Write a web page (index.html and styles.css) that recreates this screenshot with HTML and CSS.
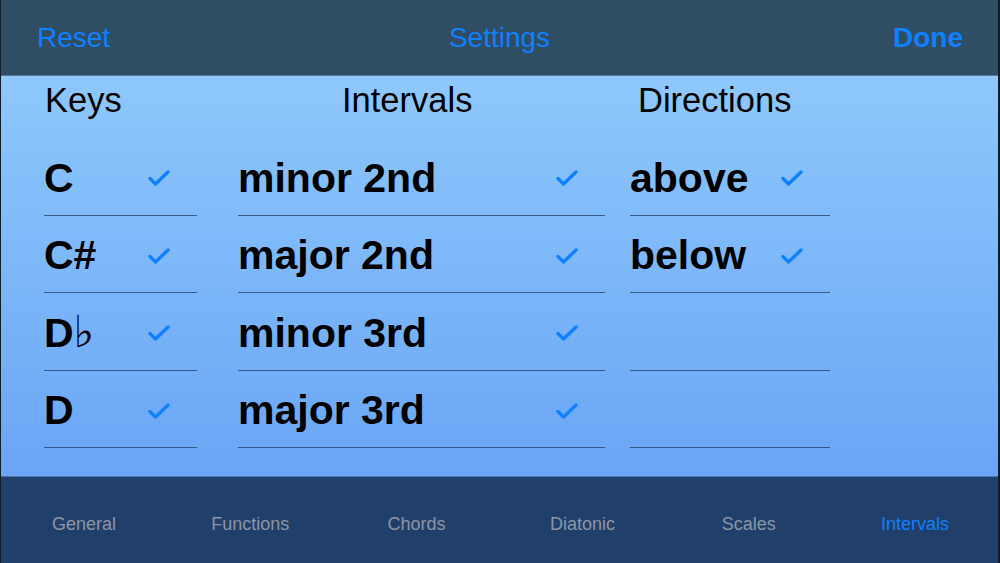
FILE: index.html
```html
<!DOCTYPE html>
<html lang="en">
<head>
  <meta charset="UTF-8" />
  <meta name="viewport" content="width=device-width, initial-scale=1.0"/>
  <title>Settings</title>
  <link rel="stylesheet" href="styles.css">
</head>
<body>
<div class="app">

  <header class="nav-bar">
    <button class="nav-btn">Reset</button>
    <div class="nav-title">Settings</div>
    <button class="nav-btn done">Done</button>
  </header>

  <main class="content">
    <section class="col col-keys">
      <h3>Keys</h3>
      <ul>
        <li><span>C</span><svg class="check" viewBox="0 0 22 16"><path d="M2 8.5l5.5 5.5L20 2"/></svg></li>
        <li><span>C#</span><svg class="check" viewBox="0 0 22 16"><path d="M2 8.5l5.5 5.5L20 2"/></svg></li>
        <li><span>D<span class="flat">♭</span></span><svg class="check" viewBox="0 0 22 16"><path d="M2 8.5l5.5 5.5L20 2"/></svg></li>
        <li><span>D</span><svg class="check" viewBox="0 0 22 16"><path d="M2 8.5l5.5 5.5L20 2"/></svg></li>
      </ul>
    </section>

    <section class="col col-intervals">
      <h3>Intervals</h3>
      <ul>
        <li><span>minor 2nd</span><svg class="check" viewBox="0 0 22 16"><path d="M2 8.5l5.5 5.5L20 2"/></svg></li>
        <li><span>major 2nd</span><svg class="check" viewBox="0 0 22 16"><path d="M2 8.5l5.5 5.5L20 2"/></svg></li>
        <li><span>minor 3rd</span><svg class="check" viewBox="0 0 22 16"><path d="M2 8.5l5.5 5.5L20 2"/></svg></li>
        <li><span>major 3rd</span><svg class="check" viewBox="0 0 22 16"><path d="M2 8.5l5.5 5.5L20 2"/></svg></li>
      </ul>
    </section>

    <section class="col col-directions">
      <h3>Directions</h3>
      <ul>
        <li><span>above</span><svg class="check" viewBox="0 0 22 16"><path d="M2 8.5l5.5 5.5L20 2"/></svg></li>
        <li><span>below</span><svg class="check" viewBox="0 0 22 16"><path d="M2 8.5l5.5 5.5L20 2"/></svg></li>
        <li></li>
        <li></li>
      </ul>
    </section>
  </main>

  <nav class="tab-bar">
    <a>General</a>
    <a>Functions</a>
    <a>Chords</a>
    <a>Diatonic</a>
    <a>Scales</a>
    <a class="active">Intervals</a>
  </nav>

</div>
</body>
</html>
```

FILE: styles.css
```css
html, body {
  margin: 0;
  padding: 0;
}

body {
  font-family: "Liberation Sans", Arial, sans-serif;
  background-color: #0d1a26;
  color: #000;
}

.app {
  width: 1000px;
  height: 563px;
  box-sizing: border-box;
  border-left: 1px solid #0f1c29;
  border-right: 2px solid #0f1c29;
  display: flex;
  flex-direction: column;
}

.nav-bar {
  height: 76px;
  box-sizing: border-box;
  background-color: #2f4d63;
  border-bottom: 1px solid #56779a;
  display: flex;
  align-items: center;
  justify-content: space-between;
  padding: 1px 35px 0 36px;
  position: relative;
}

.nav-btn {
  background: none;
  border: none;
  padding: 0;
  font-family: inherit;
  font-size: 28px;
  color: #0f80ff;
  cursor: pointer;
}

.nav-btn.done {
  font-weight: bold;
}

.nav-title {
  font-size: 28px;
  color: #0f80ff;
  position: absolute;
  left: 0;
  right: 0;
  text-align: center;
  pointer-events: none;
}

.content {
  flex: 1;
  background: linear-gradient(#8ec8fc, #6aa5f6);
  display: flex;
  padding-left: 43px;
}

.col h3 {
  margin: 0 0 14px;
  height: 48px;
  line-height: 48px;
  font-size: 34.5px;
  font-weight: normal;
  white-space: nowrap;
}

.col ul {
  list-style: none;
  margin: 0;
  padding: 0;
}

.col li {
  height: 77.5px;
  box-sizing: border-box;
  border-bottom: 1px solid rgba(30, 52, 85, 0.7);
  display: flex;
  align-items: center;
  justify-content: space-between;
  padding: 4px 27px 0 0;
  font-size: 41px;
  font-weight: bold;
}

.flat {
  font-family: "DejaVu Sans", sans-serif;
  font-weight: normal;
  font-size: 44px;
  line-height: 1;
}

.check {
  width: 22px;
  height: 16px;
  fill: none;
  stroke: #0f80ff;
  stroke-width: 3.4;
  stroke-linecap: round;
  stroke-linejoin: round;
}

.col-keys {
  width: 153px;
}

.col-keys h3 {
  padding-left: 1px;
}

.col-intervals {
  width: 367px;
  margin-left: 41px;
}

.col-intervals h3 {
  padding-left: 104px;
}

.col-directions {
  width: 200px;
  margin-left: 25px;
}

.col-directions h3 {
  padding-left: 8px;
}

.tab-bar {
  height: 87px;
  box-sizing: border-box;
  background-color: #213f6b;
  border-top: 1px solid #4c75b0;
  display: flex;
  align-items: center;
  padding-top: 8px;
}

.tab-bar a {
  flex: 1;
  text-align: center;
  font-size: 18px;
  color: #8b96a6;
}

.tab-bar a.active {
  color: #0f80ff;
}
```
